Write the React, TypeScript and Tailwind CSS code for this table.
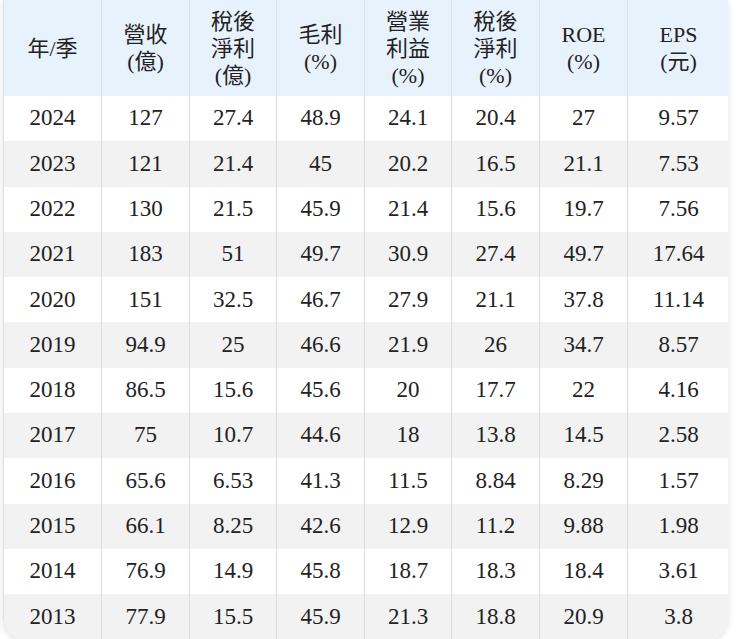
const headers: string[][] = [
  ['年/季'],
  ['營收', '(億)'],
  ['稅後', '淨利', '(億)'],
  ['毛利', '(%)'],
  ['營業', '利益', '(%)'],
  ['稅後', '淨利', '(%)'],
  ['ROE', '(%)'],
  ['EPS', '(元)'],
];

const rows: string[][] = [
  ['2024', '127', '27.4', '48.9', '24.1', '20.4', '27', '9.57'],
  ['2023', '121', '21.4', '45', '20.2', '16.5', '21.1', '7.53'],
  ['2022', '130', '21.5', '45.9', '21.4', '15.6', '19.7', '7.56'],
  ['2021', '183', '51', '49.7', '30.9', '27.4', '49.7', '17.64'],
  ['2020', '151', '32.5', '46.7', '27.9', '21.1', '37.8', '11.14'],
  ['2019', '94.9', '25', '46.6', '21.9', '26', '34.7', '8.57'],
  ['2018', '86.5', '15.6', '45.6', '20', '17.7', '22', '4.16'],
  ['2017', '75', '10.7', '44.6', '18', '13.8', '14.5', '2.58'],
  ['2016', '65.6', '6.53', '41.3', '11.5', '8.84', '8.29', '1.57'],
  ['2015', '66.1', '8.25', '42.6', '12.9', '11.2', '9.88', '1.98'],
  ['2014', '76.9', '14.9', '45.8', '18.7', '18.3', '18.4', '3.61'],
  ['2013', '77.9', '15.5', '45.9', '21.3', '18.8', '20.9', '3.8'],
];

const cols = 'grid grid-cols-[97px_88px_87px_88px_87px_88px_88px_102px]';

export default function App() {
  return (
    <div className="w-[740px] h-[639px] overflow-hidden bg-white">
      <div
        className="ml-[3px] w-[725px] rounded-b-[22px] overflow-hidden border-l border-[#e2e2e2] shadow-[0_2px_6px_rgba(0,0,0,0.12)] text-[#222]"
        style={{ fontFamily: '"Liberation Serif", "Noto Sans CJK TC", serif' }}
      >
        <div className={`${cols} h-[96px] bg-[#e8f2fd]`}>
          {headers.map((h, i) => (
            <div
              key={i}
              className={`flex flex-col items-center justify-center text-[22px] leading-[27px] ${i > 0 ? 'border-l border-[#d6e2ee]' : ''}`}
            >
              {h.map((line, j) => (
                <span key={j}>{line}</span>
              ))}
            </div>
          ))}
        </div>
        {rows.map((r, ri) => (
          <div
            key={ri}
            className={`${cols} h-[45.3px] ${ri % 2 === 0 ? 'bg-white' : 'bg-[#f2f2f2]'}`}
          >
            {r.map((v, ci) => (
              <div
                key={ci}
                className={`flex items-center justify-center text-[23px] ${ci > 0 ? 'border-l border-[#dcdcdc]' : ''}`}
              >
                {v}
              </div>
            ))}
          </div>
        ))}
      </div>
    </div>
  );
}
